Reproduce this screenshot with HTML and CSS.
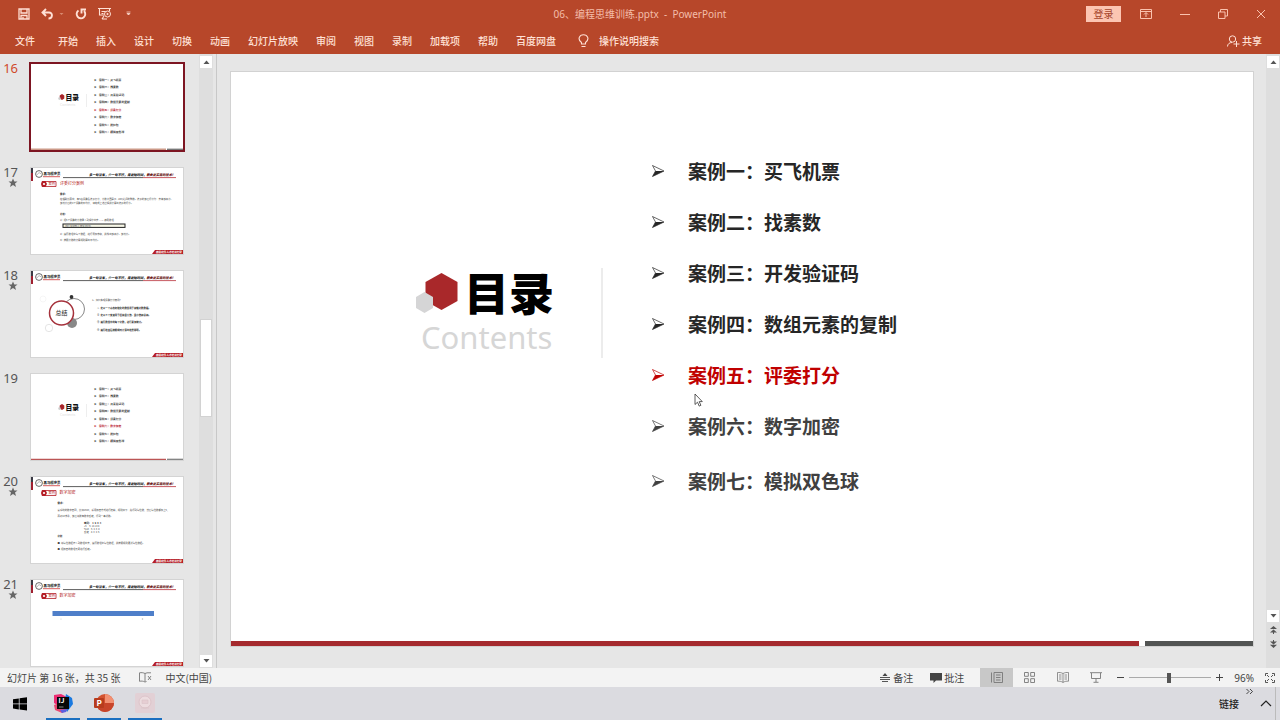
FILE: index.html
```html
<!DOCTYPE html>
<html lang="zh-CN">
<head>
<meta charset="utf-8">
<meta name="viewport" content="width=device-width, initial-scale=1">
<title>06、编程思维训练.pptx - PowerPoint</title>
<link rel="stylesheet" href="styles.css">
</head>
<body>
<svg class="defs" aria-hidden="true">
  <symbol id="slide-head" viewBox="0 0 152 86">
    <rect x="0" y="0" width="2" height="13" fill="#3a3a44"/><rect x="0" y="5" width="2" height="8" fill="#a02030"/>
    <circle cx="8" cy="6" r="3.4" fill="none" stroke="#444" stroke-width=".8"/>
    <path d="M6 7q2-4 4-1" fill="none" stroke="#888" stroke-width=".6"/>
    <text x="12.500" y="7" font-size="3.400" font-weight="900" fill="#333">黑马程序员</text>
    <path d="M12 8.700h17" stroke="#c33" stroke-width=".8"/>
    <path d="M32 9.600h80" stroke="#333" stroke-width=".8"/><path d="M112 9.600h33" stroke="#b8303a" stroke-width=".8"/>
    <text x="58" y="8" font-size="3.200" font-weight="900" font-style="italic" fill="#222">多一句没有，少一句不行，用更短时间，<tspan fill="#6b1a20">教会更实用的技术！</tspan></text>
    <path d="M121 86l3-4h28v4z" fill="#b51d25"/>
    <text x="125" y="85.300" font-size="2.600" font-weight="700" fill="#fff">高级软件人才培训专家</text>
  </symbol>
  <symbol id="slide-tag" viewBox="0 0 152 86">
    <path d="M11 13.500h14v5H11z" fill="#fff" stroke="#b51d25" stroke-width=".8"/>
    <path d="M10 16l1.500-3h3l1.500 3-1.500 3h-3z" fill="#b51d25"/><circle cx="13" cy="16" r="1.100" fill="#fff"/>
    <text x="17.500" y="17.300" font-size="3.200" fill="#b51d25">案例</text>
  </symbol>
  <symbol id="slide-toc" viewBox="0 0 152 86">
    <path d="M31 30l2.300 1.400v3L31 36l-2.300-1.600v-3z" fill="#a9262b"/><path d="M28.500 33l1.200.7v1.500l-1.200.7-1.200-.7v-1.500z" fill="#ccc"/>
    <text x="34.500" y="36" font-size="6.800" font-weight="900" fill="#111">目录</text>
    <text x="29" y="42" font-size="3.600" fill="#ddd">Contents</text>
    <path d="M55.500 30v13" stroke="#ddd" stroke-width=".5"/>
  </symbol>
  <symbol id="star" viewBox="0 0 10 10"><path d="M5 .5l1.300 3h3.200L7 5.500l1 3.500-3-2-3 2 1-3.500L.500 3.500h3.200z" fill="#666"/></symbol>
  <symbol id="arrow" viewBox="0 0 14 14"><path d="M1.500 1.500L13 7 1.500 12.500 4.500 7z" fill="#fff" stroke="currentColor" stroke-width=".7"/><path d="M4.500 7H13L1.500 12.500z" fill="currentColor"/></symbol>
</svg>

<header class="ribbon">
  <div class="titlebar">
    <div class="quick">
      <button aria-label="保存"><svg width="12" height="12" viewBox="0 0 12 12"><path d="M1 1h10v10H1zM3 1v4h6V1M3 11V7.500h6V11M5 9v2" fill="none" stroke="currentColor" stroke-width="1.300"/></svg></button>
      <button aria-label="撤消" class="undo"><svg width="13" height="12" viewBox="0 0 13 12"><path d="M5 1L1.500 4.500 5 8M2 4.500h6c4 0 4 6-.5 6" fill="none" stroke="currentColor" stroke-width="1.900"/></svg><svg width="5" height="4" viewBox="0 0 5 4" class="dim"><path d="M.5 1h4L2.500 3z" fill="currentColor"/></svg></button>
      <button aria-label="重复"><svg width="12" height="12" viewBox="0 0 12 12"><path d="M3.500 2.500a4.300 4.300 0 1 0 5.500.5M6.500 5.500V1.500h4.500" fill="none" stroke="currentColor" stroke-width="1.900"/></svg></button>
      <button aria-label="从头开始"><svg width="14" height="13" viewBox="0 0 14 13"><path d="M0 1.500h13M1.500 2v6H6M11.500 2v2M4 12l2-3M4 12h5M3.500 4.500h4M3.500 6.500h2" fill="none" stroke="currentColor" stroke-width="1.100"/><circle cx="9.500" cy="7" r="3" fill="none" stroke="currentColor"/><path d="M8.700 5.500v3L11 7z" fill="currentColor"/></svg></button>
      <button aria-label="自定义快速访问工具栏" class="more"><svg width="5" height="5" viewBox="0 0 5 5"><path d="M.5 1h4M1 2.500h3L2.500 4z" fill="currentColor" stroke="currentColor" stroke-width=".7"/></svg></button>
    </div>
    <div class="doc-title">06、编程思维训练.pptx&nbsp; -&nbsp; PowerPoint</div>
    <div class="window">
      <button class="login">登录</button>
      <button aria-label="功能区显示选项"><svg width="12" height="10" viewBox="0 0 12 10"><path d="M.5.5h11v9H.5zM.5 2.500h11M6 8V4M4 5.500l2-2 2 2" fill="none" stroke="currentColor"/></svg></button>
      <button aria-label="最小化"><svg width="10" height="10" viewBox="0 0 10 10"><path d="M0 5.500h10" stroke="currentColor"/></svg></button>
      <button aria-label="还原"><svg width="10" height="10" viewBox="0 0 10 10"><path d="M.5 3h6.500v6.500H.5zM2.500 3V.5H9.500v6.500H7" fill="none" stroke="currentColor"/></svg></button>
      <button aria-label="关闭"><svg width="10" height="10" viewBox="0 0 10 10"><path d="M1 1l8 8M9 1L1 9" stroke="currentColor"/></svg></button>
    </div>
  </div>
  <nav class="tabs">
    <button class="file">文件</button><button>开始</button><button>插入</button><button>设计</button><button>切换</button><button>动画</button><button>幻灯片放映</button><button>审阅</button><button>视图</button><button>录制</button><button>加载项</button><button>帮助</button><button>百度网盘</button>
    <button class="tell"><svg width="11" height="14" viewBox="0 0 11 14"><path d="M3.500 10V8.500C-1 5 1.500.8 5.500.8s6.500 4.200 2 7.700V10zM3.500 12.500h4" fill="none" stroke="currentColor" stroke-width="1.100"/></svg>操作说明搜索</button>
    <button class="share"><svg width="13" height="12" viewBox="0 0 13 12"><circle cx="5.500" cy="4" r="3.200" fill="none" stroke="currentColor"/><path d="M.5 11.500C.5 9 2.500 7.500 5 7.500M9.500 6v6M6.500 9h6" fill="none" stroke="currentColor"/></svg>共享</button>
  </nav>
</header>

<main class="work">
  <aside class="panel">
    <ol class="slides">
      <li class="current"><div class="num">16</div><button class="thumb" aria-label="幻灯片 16"><svg viewBox="0 0 152 86"><use href="#slide-toc"/>
        <g class="toc-lines"><text x="63" y="17">➤</text><text x="68" y="17">案例一：买飞机票</text><text x="63" y="24.400">➤</text><text x="68" y="24.400">案例二：找素数</text><text x="63" y="31.800">➤</text><text x="68" y="31.800">案例三：开发验证码</text><text x="63" y="39.200">➤</text><text x="68" y="39.200">案例四：数组元素的复制</text><g class="hot"><text x="63" y="47">➤</text><text x="68" y="47">案例五：评委打分</text></g><text x="63" y="54.400">➤</text><text x="68" y="54.400">案例六：数字加密</text><text x="63" y="61.800">➤</text><text x="68" y="61.800">案例七：抢红包</text><text x="63" y="69.200">➤</text><text x="68" y="69.200">案例八：模拟双色球</text></g>
        <path d="M0 85.300h135" stroke="#c98" stroke-width="1.400"/><path d="M136 85.300h16" stroke="#777" stroke-width="1.400"/></svg></button></li>
      <li><div class="num">17<svg width="10" height="10"><use href="#star"/></svg></div><button class="thumb" aria-label="幻灯片 17"><svg viewBox="0 0 152 86"><use href="#slide-head"/><use href="#slide-tag"/>
        <text x="29" y="17.400" font-size="4" fill="#b51d25">评委打分案例</text>
        <g class="body"><text class="b" x="29" y="26.500">需求：</text><text x="29" y="31.500">在唱歌比赛中，有6名评委给选手打分，分数范围是[0 - 100]之间的整数。选手的最后得分为：去掉最高分、</text><text x="29" y="36">最低分后的4个评委的平均分，请完成上述过程并计算出选手的得分。</text><text class="b" x="29" y="47">分析：</text><text x="29" y="53">1）把6个评委的分数录入到程序中去 ----&gt; 使用数组</text><rect x="32" y="56" width="62" height="3.400" fill="#f8f8e8" stroke="#222" stroke-width="1"/><text x="34" y="58.700">int[] scores = new int[6];</text><text x="29" y="66.500">2）遍历数组中每个数据，进行累加求和，并找出最高分、最低分。</text><text x="29" y="73">3）按照分数的计算规则算出平均分。</text></g></svg></button></li>
      <li><div class="num">18<svg width="10" height="10"><use href="#star"/></svg></div><button class="thumb" aria-label="幻灯片 18"><svg viewBox="0 0 152 86"><use href="#slide-head"/>
        <circle cx="43" cy="38" r="10.500" fill="none" stroke="#555" stroke-width=".7"/><circle cx="41" cy="52" r="5" fill="#888"/><circle cx="40.500" cy="26" r="1.900" fill="#333"/><circle cx="18" cy="57" r="3.700" fill="none" stroke="#ddd" stroke-width=".8"/><circle cx="12" cy="28" r="3" fill="none" stroke="#f0f0f0" stroke-width=".6"/><circle cx="30.500" cy="42" r="12" fill="#fff" stroke="#a5313b" stroke-width="1.500"/><text x="24.500" y="44.300" font-size="6" fill="#222">总结</text>
        <g class="body"><text x="61" y="29.500">1、如何实现评委打分案例？</text><g class="b"><text x="66" y="37.500">①&nbsp; 定义一个动态初始化的数组用于存储分数数据。</text><text x="66" y="45">②&nbsp; 定义三个变量用于保存最大值、最小值和总和。</text><text x="66" y="52.300">③&nbsp; 遍历数组中的每个分数，进行累加统计。</text><text x="66" y="60">④&nbsp; 遍历结束后按照规则计算出结果即可。</text></g></g></svg></button></li>
      <li><div class="num">19</div><button class="thumb" aria-label="幻灯片 19"><svg viewBox="0 0 152 86"><use href="#slide-toc"/>
        <g class="toc-lines"><text x="63" y="16">➤</text><text x="68" y="16">案例一：买飞机票</text><text x="63" y="23.400">➤</text><text x="68" y="23.400">案例二：找素数</text><text x="63" y="30.800">➤</text><text x="68" y="30.800">案例三：开发验证码</text><text x="63" y="38.200">➤</text><text x="68" y="38.200">案例四：数组元素的复制</text><text x="63" y="46">➤</text><text x="68" y="46">案例五：评委打分</text><g class="hot"><text x="63" y="53.400">➤</text><text x="68" y="53.400">案例六：数字加密</text></g><text x="63" y="60.800">➤</text><text x="68" y="60.800">案例七：抢红包</text><text x="63" y="68.200">➤</text><text x="68" y="68.200">案例八：模拟双色球</text></g>
        <path d="M0 85.300h135" stroke="#b55" stroke-width="1.200"/><path d="M136 85.300h16" stroke="#777" stroke-width="1.200"/></svg></button></li>
      <li><div class="num">20<svg width="10" height="10"><use href="#star"/></svg></div><button class="thumb" aria-label="幻灯片 20"><svg viewBox="0 0 152 86"><use href="#slide-head"/><use href="#slide-tag"/>
        <text x="28.500" y="17.400" font-size="4" fill="#b51d25">数字加密</text>
        <g class="body"><text class="b" x="26.500" y="27">需求：</text><text x="26.500" y="33.500">某系统的数字密码，比如1983，采用加密方式进行传输，规则如下：先得到每位数，然后每位数都加上5，</text><text x="26.500" y="39.500">再对10求余，最后将所有数字反转，得到一串新数。</text><text class="b" x="53" y="46.500">密码：&nbsp; 1&nbsp; 9&nbsp; 8&nbsp; 3</text><text x="53" y="49.800">+5 &nbsp; &nbsp; 6 &nbsp;14 13 8</text><text x="53" y="53.100">%10&nbsp; &nbsp; 6&nbsp; 4&nbsp; 3&nbsp; 8</text><text x="53" y="56.400">反转&nbsp; &nbsp; 8&nbsp; 3&nbsp; 4&nbsp; 6</text><text class="b" x="26.500" y="60">分析</text><text x="26.500" y="66.500">●&nbsp; 将每位数据存入到数组中去，遍历数组中每位数据，并按照规则更新每位数据。</text><text x="26.500" y="73">●&nbsp; 把加密的数组元素进行反转。</text></g></svg></button></li>
      <li><div class="num">21<svg width="10" height="10"><use href="#star"/></svg></div><button class="thumb" aria-label="幻灯片 21"><svg viewBox="0 0 152 86"><use href="#slide-head"/><use href="#slide-tag"/>
        <text x="28.500" y="17.400" font-size="4" fill="#b51d25">数字加密</text><path d="M21.500 31H123v5H21.500z" fill="#4f7fc9"/><circle cx="30" cy="39" r=".5" fill="#bbb"/><circle cx="111.500" cy="39" r=".8" fill="#bbb"/></svg></button></li>
    </ol>
    <div class="scroll">
      <button aria-label="向上"><svg width="7" height="4" viewBox="0 0 7 4"><path d="M.5 4h6l-3-3.500z"/></svg></button>
      <div class="track"><div class="handle"></div></div>
      <button aria-label="向下"><svg width="7" height="4" viewBox="0 0 7 4"><path d="M.5 0h6l-3 3.500z"/></svg></button>
    </div>
  </aside>

  <section class="stage">
    <article class="slide">
      <div class="content">
        <div class="brand">
          <div class="brand-row">
            <svg width="44" height="42" viewBox="0 0 44 42"><path d="M26.500 1l16 9v19l-16 9-16-9V10z" fill="#a9282a"/><path d="M9.500 20l8.500 5v11l-8.500 5L1 36V25z" fill="#d5d5d6"/></svg>
            <h1>目录</h1>
          </div>
          <p>Contents</p>
        </div>
        <div class="rule"></div>
        <ul class="cases">
          <li><svg width="14" height="14"><use href="#arrow"/></svg>案例一：买飞机票</li>
          <li><svg width="14" height="14"><use href="#arrow"/></svg>案例二：找素数</li>
          <li><svg width="14" height="14"><use href="#arrow"/></svg>案例三：开发验证码</li>
          <li><svg width="14" height="14"><use href="#arrow"/></svg>案例四：数组元素的复制</li>
          <li class="active"><svg width="14" height="14"><use href="#arrow"/></svg>案例五：评委打分
            <svg class="cursor" width="9" height="14" viewBox="0 0 9 14"><path d="M1 1v10.500l2.500-2.300 1.700 3.900 1.700-.8-1.700-3.700H8.300z" fill="#fff" stroke="#333" stroke-width=".8"/></svg></li>
          <li class="soft"><svg width="14" height="14"><use href="#arrow"/></svg>案例六：数字加密</li>
          <li class="soft last"><svg width="14" height="14"><use href="#arrow"/></svg>案例七：模拟双色球</li>
        </ul>
      </div>
      <div class="foot"><i class="red"></i><i class="grey"></i></div>
    </article>
  </section>
  <div class="scroll main-scroll">
    <button aria-label="向上滚动"><svg width="7" height="4" viewBox="0 0 7 4"><path d="M.5 4h6l-3-3.500z"/></svg></button>
    <div class="track"></div>
    <button aria-label="向下滚动"><svg width="7" height="4" viewBox="0 0 7 4"><path d="M.5 0h6l-3 3.500z"/></svg></button>
    <button class="plain" aria-label="上一张幻灯片"><svg width="7" height="8" viewBox="0 0 7 8"><path d="M3.500 0L7 3H0zM3.500 3.500L7 6.500H0zM3 6h1v2H3z"/></svg></button>
    <button class="plain" aria-label="下一张幻灯片"><svg width="7" height="8" viewBox="0 0 7 8"><path d="M3 0h1v2H3zM0 1.500h7l-3.500 3zM0 4.800h7L3.500 8z"/></svg></button>
  </div>
</main>

<footer class="status">
  <span>幻灯片 第 16 张，共 35 张</span>
  <button aria-label="拼写检查" class="spell"><svg width="13" height="11" viewBox="0 0 13 11"><path d="M6 1.500v8M6 1.500C4 .5 2.500.5.5.8v8.500c2-.4 3.500-.3 5.500.7l1.500-.5M6 1.500L8 .8h4M9 4l3 4M12 4L9 8" fill="none" stroke="currentColor" stroke-width=".9"/></svg></button>
  <button>中文(中国)</button>
  <span class="fill"></span>
  <button class="notes"><svg width="10" height="9" viewBox="0 0 10 9"><path d="M5 0l2.500 3h-5z" fill="currentColor"/><path d="M0 4.500h10M0 6.500h10M2 8.500h6" stroke="currentColor" stroke-width=".9"/></svg>备注</button>
  <button class="comments"><svg width="12" height="10" viewBox="0 0 12 10"><path d="M0 0h12v7.500H6L3.500 10V7.500H0z" fill="currentColor"/></svg>批注</button>
  <div class="views">
    <button class="on" aria-label="普通视图"><svg width="12" height="11" viewBox="0 0 12 11"><path d="M.5.5v10M3 .5h8.500v10H3zM5 3h4.500M5 5.500h4.500M5 8h4.500" fill="none" stroke="currentColor" stroke-width=".9"/></svg></button>
    <button aria-label="幻灯片浏览"><svg width="11" height="11" viewBox="0 0 11 11"><path d="M.5.5h3.800v3.800H.5zM6.700.5h3.800v3.800H6.700zM.5 6.700h3.800v3.800H.5zM6.700 6.700h3.800v3.800H6.700z" fill="none" stroke="currentColor" stroke-width=".9"/></svg></button>
    <button aria-label="阅读视图"><svg width="12" height="11" viewBox="0 0 12 11"><path d="M6 1.500v9M6 1.500C4 .4 2.500.4.5.5v8.700c2-.1 3.500 0 5.500 1.200 2-1.200 3.500-1.300 5.500-1.200V.5C9.500.4 8 .4 6 1.500M2 3h2.500M2 5h2.500M2 7h2.500M7.500 3H10M7.500 5H10M7.500 7H10" fill="none" stroke="currentColor" stroke-width=".8"/></svg></button>
    <button aria-label="幻灯片放映"><svg width="12" height="11" viewBox="0 0 12 11"><path d="M0 .7h12M1.500 1v5.500h9V1M6 6.500V10M3.500 10.300h5" fill="none" stroke="currentColor" stroke-width=".9"/></svg></button>
  </div>
  <div class="zoom">
    <button aria-label="缩小"><svg width="7" height="7" viewBox="0 0 7 7"><path d="M0 3.500h7" stroke="currentColor"/></svg></button>
    <input type="range" min="0" max="100" value="48" aria-label="缩放">
    <button aria-label="放大"><svg width="7" height="7" viewBox="0 0 7 7"><path d="M0 3.500h7M3.500 0v7" stroke="currentColor"/></svg></button>
    <button class="percent">96%</button>
    <button aria-label="适应窗口"><svg width="10" height="10" viewBox="0 0 10 10"><path d="M.5 3V.5H3M7 .5h2.500V3M9.500 7v2.500H7M3 9.500H.5V7M2 2l2 2M8 2L6 4M8 8L6 6M2 8l2-2" fill="none" stroke="currentColor" stroke-width=".9"/></svg></button>
  </div>
</footer>

<footer class="taskbar">
  <button aria-label="开始菜单" class="start"><svg width="14" height="14" viewBox="0 0 14 14"><path d="M0 2.200l5.800-.8v5.100H0zM6.600 1.300L14 .2v6.300H6.600zM0 7.300h5.800v5.100L0 11.600zM6.600 7.300H14v6.300l-7.400-1z"/></svg></button>
  <button aria-label="IntelliJ IDEA" class="app"><svg width="20" height="20" viewBox="0 0 20 20"><path d="M1 2l7-1 6 3-8 9-5-3z" fill="#ec2d73"/><path d="M13 1l6 4 1 6-6 8-3-6z" fill="#1a79e0"/><path d="M1 12l5-2 8 7-5 3-7-3z" fill="#e94a72"/><path d="M7 17l7-1-1 3-4 1z" fill="#5a5fe0"/><path d="M4 4h12v12H4z" fill="#080808"/><text x="5.500" y="10" font-size="6.500" font-weight="700" fill="#fff">IJ</text><path d="M6 14h4.500" stroke="#aaa" stroke-width=".8"/></svg></button>
  <button aria-label="PowerPoint" class="app"><svg width="20" height="20" viewBox="0 0 20 20"><circle cx="11" cy="10" r="9" fill="#d35230"/><path d="M11 1a9 9 0 0 1 9 9h-9z" fill="#f29072"/><path d="M2 10h18a9 9 0 0 1-18 0z" fill="#c8452a"/><rect x="0" y="5" width="10" height="10" rx="1" fill="#b83b1d"/><text x="2.500" y="13" font-size="8" font-weight="700" fill="#fff">P</text></svg></button>
  <button aria-label="录屏" class="app"><svg width="20" height="20" viewBox="0 0 20 20"><rect width="20" height="20" rx="2" fill="#e2d0d5"/><circle cx="10" cy="9" r="6" fill="#ecdcdf" stroke="#ddc4ca"/><path d="M7 7h6v3.500H7zM6 15h8" fill="#e6ced3" stroke="#dac2c8" stroke-width=".6"/></svg></button>
  <span class="fill"></span>
  <span class="links">链接</span>
  <button aria-label="更多链接" class="chev"><svg width="7" height="5" viewBox="0 0 7 5"><path d="M.5 0L3 2.500.5 5M4 0l2.500 2.500L4 5" fill="none" stroke="currentColor" stroke-width=".8"/></svg></button>
  <button aria-label="显示隐藏的图标" class="tray"><svg width="12" height="7" viewBox="0 0 12 7"><path d="M1 6l5-5 5 5" fill="none" stroke="currentColor" stroke-width="1.200"/></svg></button>
  <span class="edge"></span>
</footer>
</body>
</html>
```
FILE: styles.css
```css
* { box-sizing: border-box; }
body {
  margin: 0;
  height: 100vh;
  display: flex;
  flex-direction: column;
  overflow: hidden;
  background: #e6e6e6;
  color: #333;
  font: 10px/14px "Noto Sans CJK SC", sans-serif;
}
button {
  display: flex;
  align-items: center;
  justify-content: center;
  padding: 0;
  border: 0;
  background: none;
  color: inherit;
  font: inherit;
  white-space: nowrap;
}
svg { display: block; flex: none; }
.defs { position: absolute; width: 0; height: 0; overflow: visible; }
.fill { flex: 1; }

/* ribbon */
.ribbon { flex: none; background: #b7472a; color: #ffe0d5; }
.titlebar {
  display: grid;
  grid-template-columns: 1fr auto 1fr;
  align-items: center;
  height: 27px;
}
.quick { display: flex; align-items: center; gap: 11px; padding-left: 18px; }
.undo { gap: 5px; }
.more { padding-left: 3px; }
.dim { color: #d98a70; }
.doc-title { font-family: "Noto Sans", "Noto Sans CJK SC", sans-serif; color: #f4bda9; }
.window { display: flex; align-items: center; justify-content: flex-end; gap: 28px; padding-right: 14px; color: #fac2ae; }
.login { width: 35px; height: 16px; margin-right: -9px; background: #fcc5b2; color: #a5442b; }
.tabs { display: flex; align-items: center; gap: 18px; height: 27px; padding: 0 18px 0 15px; font-weight: 500; }
.file { margin-right: 5px; }
.tell, .share { gap: 10px; }
.tell { margin-left: 4px; }
.share { gap: 2px; margin-left: auto; }

/* work area */
.work { flex: 1; min-height: 0; display: flex; }
.panel { width: 217px; flex: none; display: flex; border-right: 1px solid #c8c8c8; }
.slides {
  flex: 1;
  margin: 0;
  padding: 10px 0 0;
  list-style: none;
  overflow: hidden;
  display: flex;
  flex-direction: column;
  gap: 17px;
}
.slides li { flex: none; display: flex; gap: 13px; }
.slides .current { margin-bottom: 1px; }
.num {
  width: 18px;
  display: flex;
  flex-direction: column;
  align-items: flex-end;
  gap: 2px;
  color: #555;
  font: 13px/8px "Noto Sans", sans-serif;
}
.current .num { color: #d0492c; }
.thumb { width: 152px; background: #fff; outline: 1px solid #d4d4d4; }
.thumb svg { width: 100%; height: auto; }
.current .thumb { outline: 2px solid #7d1522; }
.toc-lines text { font-size: 2.8px; font-weight: 700; fill: #333; }
.toc-lines .hot text { fill: #b8142a; }
.body text { font-size: 2.4px; fill: #444; }
.body .b, .body .b text { font-weight: 700; fill: #222; }

.scroll { width: 14px; display: flex; flex-direction: column; margin-right: 3px; background: #dedede; }
.scroll button { height: 12px; margin: 2px 1px 0; background: #fff; fill: #555; }
.scroll .track { flex: 1; display: flex; flex-direction: column; }
.scroll .handle { height: 98px; margin: auto 1px 0; background: #fff; border: 1px solid #d2d2d2; }
.panel .track { padding-bottom: 236px; }
.panel .scroll button:last-child { margin-bottom: 1px; }
.main-scroll { margin: 0; flex: none; padding-bottom: 18px; }
.main-scroll .plain { background: none; }

.stage { flex: 1; display: flex; padding: 18px 13px 22px 14px; }
.slide { flex: 1; display: flex; flex-direction: column; background: #fff; outline: 1px solid #d2d2d2; }
.content { flex: 1; display: flex; align-items: flex-start; padding-left: 18%; }
.brand { width: 139px; margin-top: 194px; }
.brand-row { display: flex; align-items: center; gap: 5px; height: 54px; }
.brand h1 { margin: -2px 0 0; color: #000; font-size: 45px; line-height: 54px; font-weight: 900; white-space: nowrap; }
.brand p { margin: 0 0 0 6px; color: #d6d6d6; font: 31px/34px "Noto Sans", sans-serif; }
.rule { width: 2px; height: 90px; margin: 196px 48px 0 47px; background: #ececec; }
.cases {
  margin: 0;
  padding: 86px 0 0;
  list-style: none;
  display: flex;
  flex-direction: column;
  gap: 26px;
  color: #262626;
  font-size: 19px;
  line-height: 25px;
  font-weight: 700;
}
.cases li { display: flex; align-items: center; gap: 23px; position: relative; }
.cases .active { color: #c00000; }
.cases .soft { color: #404040; }
.cases .last { margin-top: 4px; }
.cursor { position: absolute; left: 43px; top: 31px; }
.foot { display: flex; gap: 6px; height: 5px; }
.red { flex: 908; background: #a52a2e; }
.grey { flex: 108; background: #525453; }

/* status bar */
.status { flex: none; display: flex; align-items: center; height: 19px; padding: 0 5px 0 7px; background: #f3f3f3; color: #444; }
.spell { margin: 0 13px 0 19px; color: #777; }
.notes, .comments { gap: 3px; }
.notes { margin-right: 17px; }
.comments { gap: 2px; margin-right: 16px; }
.views { display: flex; height: 19px; color: #777; }
.views button { width: 33px; }
.views .on { background: #c8c8c8; }
.zoom { display: flex; align-items: center; margin-left: 5px; }
.zoom input { width: 82px; height: 12px; margin: 0 5px; appearance: none; background: linear-gradient(#aaa, #aaa) center / 100% 1px no-repeat; }
.zoom input::-webkit-slider-thumb { appearance: none; width: 4px; height: 10px; background: #555; }
.percent { margin: 0 11px; font-family: "Noto Sans", sans-serif; }

/* taskbar */
.taskbar { flex: none; display: flex; height: 33px; background: #dbdbe0; color: #222; }
.start { width: 40px; margin-right: 6px; fill: #000; }
.app { width: 34px; margin-right: 7px; border-bottom: 2px solid #1a6fc0; }
.links { align-self: center; font-weight: 500; }
.chev { align-self: flex-start; margin: 2px 0 0 7px; }
.tray { width: 12px; margin-left: 7px; }
.edge { width: 1px; margin: 0 4px 0 3px; background: #bbb; }
```
